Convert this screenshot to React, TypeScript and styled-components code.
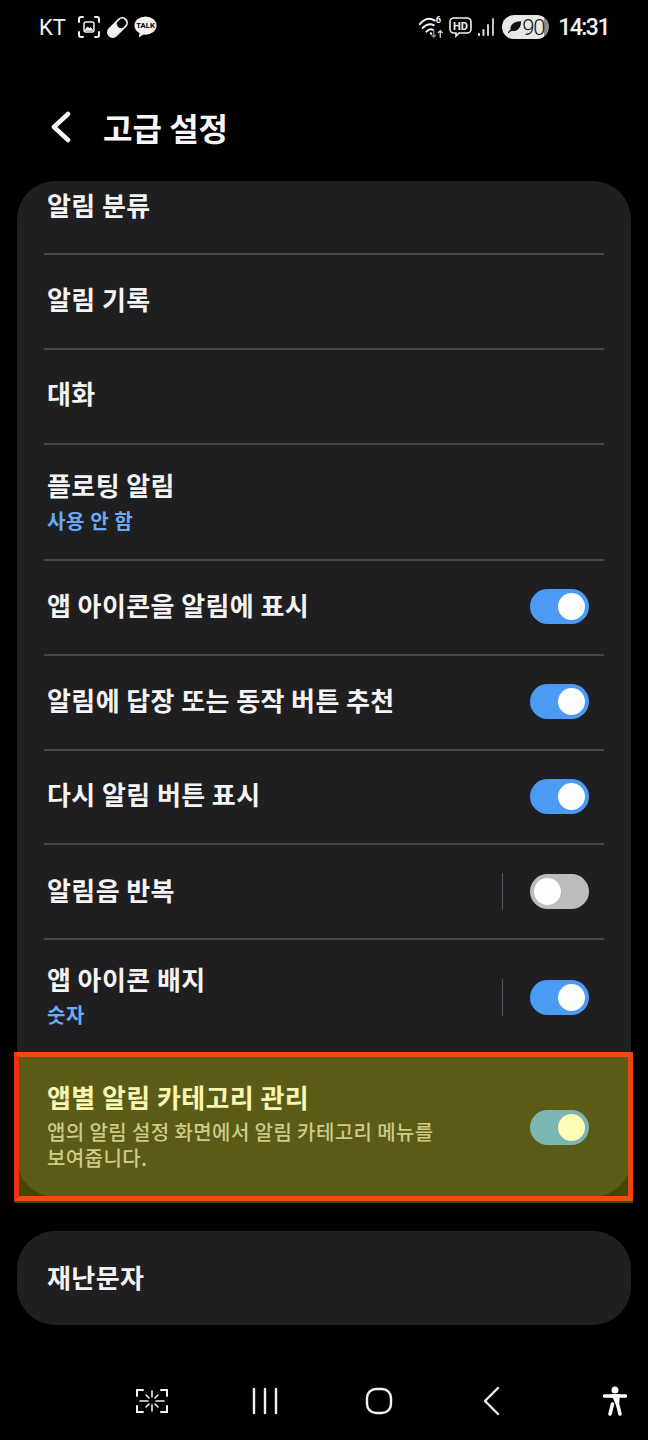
import React from 'react'
import styled, { createGlobalStyle } from 'styled-components'

const GlobalStyle = createGlobalStyle`
  html, body {
    margin: 0;
    padding: 0;
    background: #000;
  }
  body {
    font-family: "Noto Sans CJK KR", "Noto Sans", sans-serif;
    color: #f4f4f4;
  }
`

const Screen = styled.div`
  width: 648px;
  height: 1440px;
  background: #000;
  display: flex;
  flex-direction: column;
  overflow: hidden;
`

const StatusBar = styled.div`
  height: 54px;
  margin-bottom: 2px;
  padding: 0 39px;
  display: flex;
  align-items: center;
  justify-content: space-between;
  font-family: "Roboto", sans-serif;
  color: #f2f2f2;
`

const StatusGroup = styled.div`
  display: flex;
  align-items: center;
  gap: 5px;
`

const Carrier = styled.span`
  font-size: 22px;
  margin-right: 6px;
`

const Clock = styled.span`
  font-size: 23px;
  font-weight: 500;
  letter-spacing: -1.5px;
  margin-left: 4px;
`

const Battery = styled.div`
  width: 47px;
  height: 24px;
  margin-left: 2px;
  border-radius: 12px;
  background: linear-gradient(90deg, #e8e8e8 90%, #8c8c8c 90%);
  color: #111;
  display: flex;
  align-items: center;
  padding-left: 5px;
  box-sizing: border-box;
  font-size: 22px;
  font-weight: 300;
  letter-spacing: -1px;
`

const Header = styled.div`
  height: 125px;
  padding: 17px 0 0 50px;
  box-sizing: border-box;
  display: flex;
  align-items: center;
  gap: 31px;
`

const Title = styled.h1`
  margin: 0;
  font-size: 32px;
  font-weight: 700;
  color: #f6f6f6;
`

const Card = styled.div`
  margin: 0 17px;
  padding: 0 27px;
  background: #1f1f21;
  border-radius: 38px;
`

const SecondCard = styled(Card)`
  margin-top: 34px;
`

const Row = styled.div<{ $height: number; $lift?: number; $clipped?: boolean }>`
  position: relative;
  height: ${({ $height }) => $height}px;
  box-sizing: border-box;
  padding-bottom: ${({ $lift = 3 }) => $lift * 2}px;
  display: flex;
  align-items: ${({ $clipped }) => ($clipped ? 'flex-start' : 'center')};
  justify-content: space-between;
  & + & {
    border-top: 2px solid #48484a;
  }
`

const RowText = styled.div`
  display: flex;
  flex-direction: column;
  padding-left: 3px;
`

const RowTitle = styled.div<{ $clipped?: boolean }>`
  font-size: 26px;
  line-height: 36px;
  font-weight: 700;
  letter-spacing: 0.4px;
  margin-top: ${({ $clipped }) => ($clipped ? '6px' : '0')};
`

const RowValue = styled.div`
  font-size: 20px;
  line-height: 30px;
  margin-top: 3px;
  font-weight: 700;
  letter-spacing: 0.6px;
  color: #6aaaf5;
`

const RowDescription = styled.div`
  font-size: 20px;
  line-height: 26px;
  margin-top: 4px;
  font-weight: 500;
  letter-spacing: 0.4px;
  color: #b9b9b9;
  width: 400px;
`

const Controls = styled.div`
  display: flex;
  align-items: center;
  margin: 4px 15px 0 0;
`

const Divider = styled.div`
  width: 1px;
  height: 37px;
  background: #55565a;
  margin-right: 27px;
`

const Track = styled.div<{ $on: boolean }>`
  width: 59px;
  height: 35px;
  border-radius: 18px;
  box-sizing: border-box;
  padding: 4px;
  display: flex;
  justify-content: ${({ $on }) => ($on ? 'flex-end' : 'flex-start')};
  background: ${({ $on }) => ($on ? '#4b9bf5' : '#bcbcbe')};
`

const Knob = styled.div`
  width: 27px;
  height: 27px;
  border-radius: 50%;
  background: #fdfdfd;
`

// yellow marker laid over the last row of the card
const Highlight = styled.div`
  position: absolute;
  top: -3px;
  bottom: -4px;
  left: -30px;
  right: -29px;
  box-sizing: border-box;
  border: 5px solid #ef4c10;
  border-left-color: #ee2f12;
  border-right-color: #ee4412;
  background: rgba(255, 255, 0, 0.27);
  box-shadow: 0 2px 0 rgba(255, 255, 0, 0.27);
  pointer-events: none;
`

const NavBar = styled.div`
  margin-top: 41px;
  height: 70px;
  padding-left: 135px;
  display: flex;
  align-items: center;
`

const NavItem = styled.div<{ $gap?: number }>`
  display: flex;
  margin-left: ${({ $gap = 0 }) => $gap}px;
`

const Toggle = ({ on }: { on: boolean }) => (
  <Track $on={on}>
    <Knob />
  </Track>
)

const CaptureIcon = () => (
  <svg width="24" height="24" viewBox="0 0 24 24" fill="none" stroke="#f2f2f2" strokeWidth="2" strokeLinecap="round" strokeLinejoin="round">
    <path d="M6 2H4a2 2 0 0 0-2 2v3M18 2h2a2 2 0 0 1 2 2v3M2 17v3a2 2 0 0 0 2 2h2M22 17v3a2 2 0 0 1-2 2h-2" />
    <rect x="7" y="7" width="10" height="10" rx="2" strokeWidth="1.500" />
    <path d="M8 15l2.500-3 2 1.500 1-1 2 2.500z" fill="#f2f2f2" strokeWidth="1" />
  </svg>
)

const PillIcon = () => (
  <svg width="23" height="23" viewBox="0 0 24 24">
    <g transform="rotate(-45 12 12)">
      <rect x="-1" y="6" width="26" height="12" rx="6" fill="#f2f2f2" />
      <rect x="13" y="7.800" width="10" height="8.400" rx="4" fill="#000" />
    </g>
  </svg>
)

const TalkIcon = () => (
  <svg width="23" height="24" viewBox="0 0 24 24">
    <ellipse cx="12" cy="10.500" rx="11.500" ry="9.500" fill="#f2f2f2" />
    <path d="M6 17l-1 6 6-4z" fill="#f2f2f2" />
    <text x="12" y="13.500" textAnchor="middle" fontSize="8" fontWeight="700" fontFamily="Roboto, sans-serif" fill="#000">TALK</text>
  </svg>
)

const WifiIcon = () => (
  <svg width="26" height="26" viewBox="0 0 28 28" fill="none" stroke="#f2f2f2" strokeLinecap="round">
    <path d="M2 11C7 5 13 4 18 7" strokeWidth="2.200" />
    <path d="M5 15c4-4 8-5 12-3" strokeWidth="2.200" />
    <path d="M9 19c2-2 5-3 7-2" strokeWidth="2.200" />
    <circle cx="14" cy="21" r="1.300" fill="#f2f2f2" stroke="none" />
    <text x="19" y="10" fontSize="10" fontWeight="700" fontFamily="Roboto, sans-serif" fill="#f2f2f2" stroke="none">6</text>
    <path d="M17 18v7m-2-2l2 2 2-2" stroke="#8c8c8c" strokeWidth="1.500" />
    <path d="M24 25v-7m-2 2l2-2 2 2" stroke="#cfcfcf" strokeWidth="1.500" />
  </svg>
)

const HdIcon = () => (
  <svg width="23" height="22" viewBox="0 0 23 22">
    <path d="M5 2h13a4 4 0 0 1 4 4v7a4 4 0 0 1-4 4H10l-3 3v-3H5a4 4 0 0 1-4-4V6a4 4 0 0 1 4-4z" fill="none" stroke="#f2f2f2" strokeWidth="1.600" />
    <text x="11.500" y="14" textAnchor="middle" fontSize="11" fontWeight="700" fontFamily="Roboto, sans-serif" fill="#f2f2f2">HD</text>
  </svg>
)

const SignalIcon = () => (
  <svg width="18" height="22" viewBox="0 0 18 22" stroke="#f2f2f2" strokeWidth="2" strokeLinecap="round">
    <path d="M2 19v-1" />
    <path d="M6.500 19v-5" stroke="#e0e0e0" />
    <path d="M11 19V9" stroke="#d0d0d0" />
    <path d="M16 19V3" stroke="#c0c0c0" />
  </svg>
)

const LeafIcon = () => (
  <svg width="15" height="14" viewBox="0 0 17 15">
    <path d="M1 14c1-2 2-3 3-3C3 5 8 1 16 1c0 7-4 12-10 11-2 0-3 1-4 2.500z" fill="#111" />
  </svg>
)

const BackChevron = () => (
  <svg width="22" height="32" viewBox="0 0 22 32" fill="none" stroke="#f8f8f8" strokeWidth="4.500" strokeLinecap="round" strokeLinejoin="round">
    <path d="M18 3L4 16l14 13" />
  </svg>
)

const ScanKeyIcon = () => (
  <svg width="34" height="26" viewBox="0 0 34 26" fill="none" stroke="#f2f2f2" strokeWidth="2" strokeLinecap="round">
    <path d="M8 2H2v6M26 2h6v6M2 18v6h6M32 18v6h-6" />
    <path d="M17 3v6M17 17v6M5 13h8M21 13h8M11 7l3 3M23 7l-3 3M11 19l3-3M23 19l-3-3" strokeWidth="1.600" />
  </svg>
)

const RecentsIcon = () => (
  <svg width="26" height="28" viewBox="0 0 26 28" stroke="#f2f2f2" strokeWidth="2.400" strokeLinecap="round">
    <path d="M2 2v24M13 2v24M24 2v24" />
  </svg>
)

const HomeIcon = () => (
  <svg width="28" height="28" viewBox="0 0 28 28" fill="none" stroke="#f2f2f2" strokeWidth="2.400">
    <rect x="2" y="2" width="24" height="24" rx="9" />
  </svg>
)

const NavBackIcon = () => (
  <svg width="18" height="30" viewBox="0 0 18 30" fill="none" stroke="#f2f2f2" strokeWidth="2.400" strokeLinecap="round" strokeLinejoin="round">
    <path d="M15 2L2 15l13 13" />
  </svg>
)

const AccessibilityIcon = () => (
  <svg width="24" height="30" viewBox="0 0 24 30">
    <circle cx="12" cy="4" r="3.500" fill="#fff" />
    <path d="M1.500 10h21" stroke="#fff" strokeWidth="3.500" strokeLinecap="round" />
    <path d="M9 10h6l-.5 8 2.500 10M9.500 18L7 28" stroke="#fff" strokeWidth="3.500" strokeLinecap="round" strokeLinejoin="round" fill="#fff" />
  </svg>
)

export default function App() {
  return (
    <Screen>
      <GlobalStyle />
      <StatusBar>
        <StatusGroup>
          <Carrier>KT</Carrier>
          <CaptureIcon />
          <PillIcon />
          <TalkIcon />
        </StatusGroup>
        <StatusGroup>
          <WifiIcon />
          <HdIcon />
          <SignalIcon />
          <Battery>
            <LeafIcon />
            90
          </Battery>
          <Clock>14:31</Clock>
        </StatusGroup>
      </StatusBar>

      <Header>
        <BackChevron />
        <Title>고급 설정</Title>
      </Header>

      <Card>
        <Row $height={72} $lift={0} $clipped>
          <RowText>
            <RowTitle $clipped>알림 분류</RowTitle>
          </RowText>
        </Row>
        <Row $height={95}>
          <RowText><RowTitle>알림 기록</RowTitle></RowText>
        </Row>
        <Row $height={95} $lift={4}>
          <RowText><RowTitle>대화</RowTitle></RowText>
        </Row>
        <Row $height={116} $lift={1}>
          <RowText>
            <RowTitle>플로팅 알림</RowTitle>
            <RowValue>사용 안 함</RowValue>
          </RowText>
        </Row>
        <Row $height={95}>
          <RowText><RowTitle>앱 아이콘을 알림에 표시</RowTitle></RowText>
          <Controls><Toggle on /></Controls>
        </Row>
        <Row $height={95}>
          <RowText><RowTitle>알림에 답장 또는 동작 버튼 추천</RowTitle></RowText>
          <Controls><Toggle on /></Controls>
        </Row>
        <Row $height={94}>
          <RowText><RowTitle>다시 알림 버튼 표시</RowTitle></RowText>
          <Controls><Toggle on /></Controls>
        </Row>
        <Row $height={95} $lift={2}>
          <RowText><RowTitle>알림음 반복</RowTitle></RowText>
          <Controls>
            <Divider />
            <Toggle on={false} />
          </Controls>
        </Row>
        <Row $height={115} $lift={1}>
          <RowText>
            <RowTitle>앱 아이콘 배지</RowTitle>
            <RowValue>숫자</RowValue>
          </RowText>
          <Controls>
            <Divider />
            <Toggle on />
          </Controls>
        </Row>
        <Row $height={144} $lift={1}>
          <RowText>
            <RowTitle>앱별 알림 카테고리 관리</RowTitle>
            <RowDescription>앱의 알림 설정 화면에서 알림 카테고리 메뉴를 보여줍니다.</RowDescription>
          </RowText>
          <Controls><Toggle on /></Controls>
          <Highlight />
        </Row>
      </Card>

      <SecondCard>
        <Row $height={94} $lift={1}>
          <RowText><RowTitle>재난문자</RowTitle></RowText>
        </Row>
      </SecondCard>

      <NavBar>
        <NavItem><ScanKeyIcon /></NavItem>
        <NavItem $gap={83}><RecentsIcon /></NavItem>
        <NavItem $gap={87}><HomeIcon /></NavItem>
        <NavItem $gap={90}><NavBackIcon /></NavItem>
        <NavItem $gap={102}><AccessibilityIcon /></NavItem>
      </NavBar>
    </Screen>
  )
}
